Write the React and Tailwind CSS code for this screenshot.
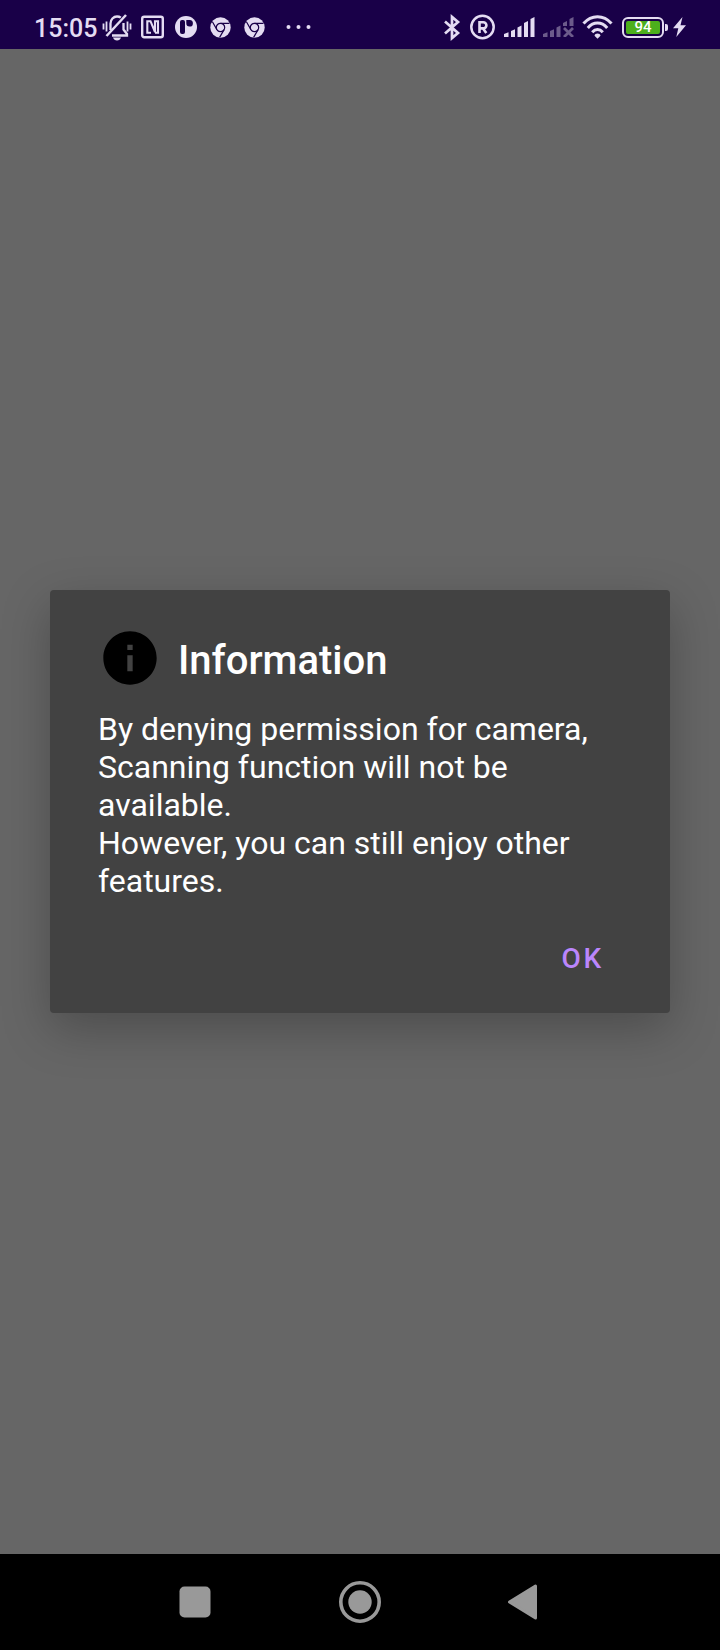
import React from "react";

function BellOff() {
  return (
    <svg className="ml-[5px] h-[27px] w-[30px]" viewBox="0 0 30 27" fill="none" stroke="currentColor">
      <path d="M1.500 9.500v6M4.500 7.500v10M28.500 9.500v6M25.500 7.500v10" strokeWidth="1.800" />
      <path d="M21.500 9v6.500l3.500 4.500v1.500H10M8.500 16V9.500C8.500 5.500 11.500 2.500 15 2.500c1.500 0 2.800.4 3.800 1.200" strokeWidth="2.300" />
      <path d="M24 1L4.500 22" strokeWidth="2.500" />
      <path d="M11 23.500h8c-.6 1.800-2 3-4 3s-3.400-1.200-4-3z" fill="currentColor" stroke="none" />
    </svg>
  );
}

function Nfc() {
  return (
    <svg className="ml-[9px] h-[24px] w-[23px]" viewBox="0 0 23 24" fill="none" stroke="currentColor">
      <rect x="1.200" y="1.700" width="20.600" height="20.600" rx="2" strokeWidth="2.400" />
      <path d="M10 17.800H6.300V6.200H9.500L14 17V6.200H17V17.800H14" strokeWidth="2.100" />
    </svg>
  );
}

function Pad() {
  return (
    <svg className="ml-[11px] size-[22px]" viewBox="0 0 22 22">
      <circle cx="11" cy="11" r="11" fill="currentColor" />
      <rect x="5" y="4" width="5" height="14" rx="2" fill="#190048" />
      <path d="M11.300 6V4h3.500a3.300 3.300 0 1 1-3.500 3.300z" fill="#190048" />
    </svg>
  );
}

function Chrome() {
  return (
    <svg className="ml-[13px] size-[21px]" viewBox="0 0 21 21">
      <circle cx="10.500" cy="10.500" r="10.200" fill="currentColor" />
      <circle cx="10.500" cy="10.500" r="4.200" fill="none" stroke="#190048" strokeWidth="1.200" />
      <path d="M10.500 6.300H19.500M6.900 12.600L2.400 4.800M14.100 12.600L9.600 20.400" stroke="#190048" strokeWidth="1.200" />
    </svg>
  );
}

function Dots() {
  return (
    <svg className="ml-[21px] h-[6px] w-[25px]" viewBox="0 0 25 6" fill="currentColor">
      <circle cx="2.500" cy="3" r="2" />
      <circle cx="12.500" cy="3" r="2" />
      <circle cx="22.500" cy="3" r="2" />
    </svg>
  );
}

function Bluetooth() {
  return (
    <svg className="h-[27px] w-[17px]" viewBox="0 0 17 27" fill="none" stroke="currentColor" strokeWidth="2.700">
      <path d="M1 7.500L14 19 8 24V3L14 8 1 19.500" />
    </svg>
  );
}

function Registered() {
  return (
    <svg className="ml-[9px] size-[26px]" viewBox="0 0 26 26" fill="none" stroke="currentColor">
      <circle cx="12.500" cy="13" r="11.200" strokeWidth="2.500" />
      <path d="M9.500 19V8.200h3.800a3 3 0 0 1 0 6.200H9.500M13 14.400L16.300 19" strokeWidth="2.600" />
    </svg>
  );
}

function Signal() {
  return (
    <svg className="ml-[8px] h-[20px] w-[32px]" viewBox="0 0 32 20" fill="currentColor">
      <path d="M0 20v-3l4.500-1.700V20zM7 20v-6l4-1.700V20zM13.500 20v-9.500l4-2V20zM20 20V6l4-2v16zM26.500 20V2l4-2v20z" />
    </svg>
  );
}

function SignalOff() {
  return (
    <svg className="ml-[7px] h-[20px] w-[32px] text-[#6c5b8b]" viewBox="0 0 32 20" fill="currentColor">
      <path d="M0 20v-3l4.500-1.700V20zM7 20v-6l4-1.700V20zM13.500 20v-9.500l4-2V20zM20 9V6l4-2v5zM26.500 9V2l4-2v9z" />
      <path d="M21 11l9 9M30 11l-9 9" stroke="currentColor" strokeWidth="2.800" />
    </svg>
  );
}

function Wifi() {
  return (
    <svg className="ml-[7px] h-[24px] w-[31px]" viewBox="0 0 31 24" fill="none" stroke="currentColor" strokeWidth="3">
      <path d="M1.500 8.500C9.500-.6 21.500-.6 29.500 8.500M5.800 12.900c5.600-6.400 13.800-6.400 19.400 0M10.200 17.200c3.200-3.600 7.400-3.600 10.600 0" />
      <path d="M15.500 23.800l-3-3.100c.3-3 5.700-3 6 0z" fill="currentColor" stroke="none" />
    </svg>
  );
}

function Battery() {
  return (
    <div className="ml-[9px] flex items-center gap-px">
      <div className="flex h-[21px] w-[42px] rounded-[6px] border-2 border-current p-[2px]">
        <span className="flex flex-1 items-center justify-center rounded-[2px] bg-[#4caf1c] text-[15px] leading-none font-medium text-white">94</span>
      </div>
      <span className="h-[7px] w-[3px] rounded-r-[2px] bg-current" />
    </div>
  );
}

function Bolt() {
  return (
    <svg className="ml-[5px] h-[20px] w-[13px]" viewBox="0 0 13 20" fill="currentColor">
      <path d="M9.500 0L0 11.300h5.300L3.300 20 13 8.300H7.500z" />
    </svg>
  );
}

export default function App() {
  return (
    <div className="flex min-h-screen flex-col bg-[#666666] font-[Roboto,sans-serif]">
      <header className="flex h-[49px] items-center justify-between bg-[#190048] pt-[5px] pr-[34px] pl-[34px] text-[#e4dcf2]">
        <div className="flex items-center">
          <time className="pt-0.5 text-[25px] leading-none font-medium">15:05</time>
          <BellOff />
          <Nfc />
          <Pad />
          <Chrome />
          <Chrome />
          <Dots />
        </div>
        <div className="flex items-center">
          <Bluetooth />
          <Registered />
          <Signal />
          <SignalOff />
          <Wifi />
          <Battery />
          <Bolt />
        </div>
      </header>

      <main className="flex flex-1 items-center px-[50px]">
        <section
          role="alertdialog"
          aria-labelledby="dialog-title"
          aria-describedby="dialog-text"
          className="flex w-full flex-col rounded-[4px] bg-[#424242] pt-9 pb-[18px] shadow-[0_16px_48px_rgba(0,0,0,0.25)]"
        >
          <div className="flex items-center gap-4 px-12">
            <svg className="size-16" viewBox="0 0 24 24">
              <path d="M12 2C6.480 2 2 6.480 2 12s4.480 10 10 10 10-4.480 10-10S17.520 2 12 2zm1 15h-2v-6h2v6zm0-8h-2V7h2v2z" />
            </svg>
            <h1 id="dialog-title" className="pt-1.5 text-[40px] leading-[48px] font-medium text-white">Information</h1>
          </div>
          <p id="dialog-text" className="mt-5 px-12 text-[32px] leading-[38px] text-white">
            By denying permission for camera, Scanning function will not be available.
            <br />
            However, you can still enjoy other features.
          </p>
          <div className="mt-[23px] flex justify-end px-12">
            <button type="button" className="h-[72px] px-[18px] text-[28px] font-medium tracking-widest text-[#bb86fc]">OK</button>
          </div>
        </section>
      </main>

      <nav className="flex h-24 items-center justify-center gap-[120px] bg-black text-[#999999]">
        <button type="button" aria-label="Recent apps">
          <svg className="size-[44px]" viewBox="0 0 44 44" fill="currentColor">
            <rect x="5.500" y="6.500" width="31" height="31" rx="5" />
          </svg>
        </button>
        <button type="button" aria-label="Home">
          <svg className="size-[44px]" viewBox="0 0 44 44" fill="currentColor">
            <circle cx="22" cy="22" r="19.200" fill="none" stroke="currentColor" strokeWidth="3.600" />
            <circle cx="22" cy="22" r="11.700" />
          </svg>
        </button>
        <button type="button" aria-label="Back">
          <svg className="size-[44px]" viewBox="0 0 44 44" fill="currentColor">
            <path d="M7.500 22L33.500 6V38z" stroke="currentColor" strokeWidth="3" strokeLinejoin="round" />
          </svg>
        </button>
      </nav>
    </div>
  );
}
